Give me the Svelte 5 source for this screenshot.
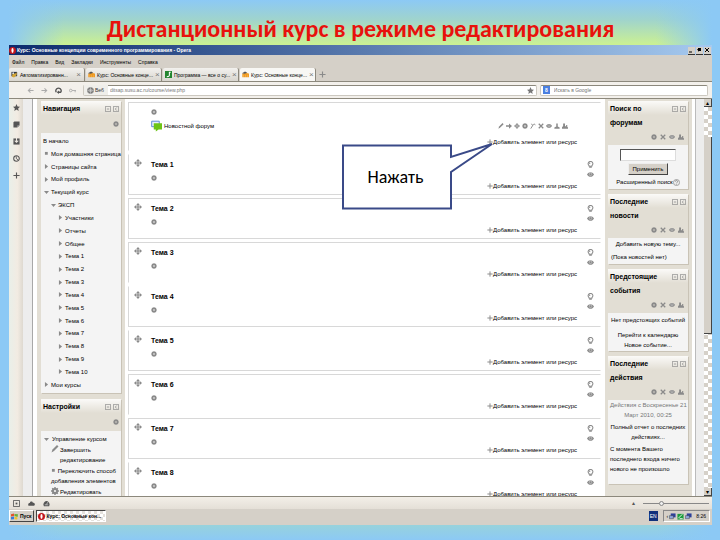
<script lang="ts">
	const menu = ['Файл', 'Правка', 'Вид', 'Закладки', 'Инструменты', 'Справка'];

	const tabs = [
		{ icon: 'photo', title: 'Автоматизированн...' },
		{ icon: 'moodle', title: 'Курс: Основные конце...' },
		{ icon: 'leaf', title: 'Программа — все о су...' },
		{ icon: 'moodle', title: 'Курс: Основные конце...' },
	];

	const nav = [
		{ level: 0, mark: '', label: 'В начало' },
		{ level: 1, mark: 'square', label: 'Моя домашняя страница' },
		{ level: 1, mark: 'right', label: 'Страницы сайта' },
		{ level: 1, mark: 'right', label: 'Мой профиль' },
		{ level: 1, mark: 'down', label: 'Текущий курс' },
		{ level: 2, mark: 'down', label: 'ЭКСП' },
		...['Участники', 'Отчеты', 'Общее', 'Тема 1', 'Тема 2', 'Тема 3', 'Тема 4', 'Тема 5',
			'Тема 6', 'Тема 7', 'Тема 8', 'Тема 9', 'Тема 10'
		].map((label) => ({ level: 3, mark: 'right', label })),
		{ level: 1, mark: 'right', label: 'Мои курсы' },
	];

	// some of the frame lines are dropped where sections meet
	const topics = [
		{ n: 1, top: false, bottom: true },
		{ n: 2, top: true, bottom: true },
		{ n: 3, top: true, bottom: false },
		{ n: 4, top: false, bottom: true },
		{ n: 5, top: false, bottom: true },
		{ n: 6, top: true, bottom: false },
		{ n: 7, top: true, bottom: true },
		{ n: 8, top: false, bottom: true },
	];

	const forumTools = ['pencil', 'arrow', 'move', 'gear', 'fork', 'cross', 'eye', 'person', 'group'];
	const blockTools = ['gear', 'cross', 'eye', 'group'];
	const sideTools = ['star', 'note', 'download', 'clock', 'plus'];
	let search = $state('');
	let address = $state('ditsap.susu.ac.ru/course/view.php');
	let google = $state('');
</script>

{#snippet icon(name: string)}
	<svg class="icon" viewBox="0 0 16 16" aria-hidden="true">
		{#if name === 'gear'}
			<circle cx="8" cy="8" r="4.2" fill="none" stroke="currentColor" stroke-width="4" />
			<path d="M8 0v4M8 12v4M0 8h4M12 8h4M2.4 2.4l2.8 2.8M10.8 10.8l2.8 2.8M13.6 2.4l-2.8 2.8M5.2 10.8l-2.8 2.8" stroke="currentColor" stroke-width="3" />
		{:else if name === 'move'}
			<path d="M8 0l4 4.4H9.2v2.4h2.4V4L16 8l-4.4 4V9.2H9.2v2.4H12L8 16l-4-4.4h2.8V9.2H4.4V12L0 8l4.4-4v2.8h2.4V4.4H4z" fill="currentColor" />
		{:else if name === 'plus'}
			<path d="M8 1v14M1 8h14" stroke="currentColor" stroke-width="2.6" />
		{:else if name === 'bulb'}
			<path d="M5 11C1 8 2 1 8 1s7 7 3 10v1H5z" fill="#fff" stroke="currentColor" stroke-width="2.4" />
			<path d="M5 14h6M5 6l2-2" stroke="currentColor" stroke-width="3" />
		{:else if name === 'eye'}
			<path d="M0 8C4 1 12 1 16 8 12 15 4 15 0 8z" fill="currentColor" />
			<circle cx="8" cy="7.5" r="3" fill="none" stroke="#ddd" stroke-width="1.2" />
		{:else if name === 'pencil'}
			<path d="M1 15l2-6L12 0l3 3-9 9z" fill="currentColor" />
		{:else if name === 'arrow'}
			<path d="M0 6h8V1l8 7-8 7v-5H0z" fill="currentColor" />
		{:else if name === 'fork'}
			<path d="M2 15L7 7M7 7L4 2M7 7c3-6 6-4 8-1" fill="none" stroke="currentColor" stroke-width="2.6" />
		{:else if name === 'cross'}
			<path d="M2 2l12 12M14 2L2 14" stroke="currentColor" stroke-width="3.4" />
		{:else if name === 'person'}
			<path d="M6 1h4v8l5 3v3H1v-3l5-3z" fill="currentColor" />
		{:else if name === 'group'}
			<path d="M3 1h5v7l3 1V5h3v5l2 2v3H0v-4l3-3z" fill="currentColor" />
		{:else if name === 'right'}
			<path d="M3 0l10 8-10 8z" fill="currentColor" />
		{:else if name === 'down'}
			<path d="M0 3h16l-8 10z" fill="currentColor" />
		{:else if name === 'square'}
			<path d="M3 3h9v9H3z" fill="#8a8a8a" />
		{:else if name === 'star'}
			<path d="M8 0l2.4 5.6L16 6l-4.2 4L13 16l-5-3.2L3 16l1.2-6L0 6l5.6-.4z" fill="currentColor" />
		{:else if name === 'note'}
			<path d="M3 1h12v9l-5 5H1V3z" fill="currentColor" />
			<path d="M10 15v-4l5-1" fill="none" stroke="#ddd" />
		{:else if name === 'download'}
			<path d="M1 1h14v14H1z" fill="currentColor" />
			<path d="M8 0v9M4 6l4 4 4-4" fill="none" stroke="#efeae2" stroke-width="2.4" />
		{:else if name === 'clock'}
			<circle cx="8" cy="8" r="6.4" fill="none" stroke="currentColor" stroke-width="2.4" />
			<path d="M7.5 3v5l4 3" fill="none" stroke="currentColor" stroke-width="2" />
		{:else if name === 'back'}
			<path d="M15 8H3M8 3L3 8l5 5" fill="none" stroke="currentColor" stroke-width="2.4" />
		{:else if name === 'forward'}
			<path d="M1 8h12M8 3l5 5-5 5" fill="none" stroke="currentColor" stroke-width="2.4" />
		{:else if name === 'reload'}
			<path d="M3 12A6 6 0 1 1 13 12H7" fill="none" stroke="currentColor" stroke-width="3" />
			<path d="M9 8v8l-5-4z" fill="currentColor" />
		{:else if name === 'key'}
			<circle cx="4" cy="8" r="3" fill="none" stroke="currentColor" stroke-width="2" />
			<path d="M7 8h9M14 8v4" stroke="currentColor" stroke-width="2" />
		{:else if name === 'globe'}
			<circle cx="8" cy="8" r="7.5" fill="#777" />
			<path d="M8 1v14M1 8h14M3 4c3 3 7 3 10 0M3 12c3-3 7-3 10 0" fill="none" stroke="#eee" />
		{:else if name === 'minus'}
			<path d="M1 1h14v14H1zM5 8h6" fill="none" stroke="currentColor" stroke-width="2" />
		{:else if name === 'dock'}
			<path d="M1 1h14v14H1zM10 4L6 8l4 4" fill="none" stroke="currentColor" stroke-width="2" />
		{:else if name === 'opera'}
			<circle cx="8" cy="8" r="8" fill="#c3161c" />
			<ellipse cx="8" cy="8" rx="2.4" ry="5.6" fill="#fff" />
		{:else if name === 'moodle'}
			<path d="M2 14V7h3v7M7 14V7h3v7M12 14V7h3v7M2 8c2-3 12-3 13 0" fill="none" stroke="#f09a20" stroke-width="2.6" />
			<path d="M0 5l7-4 5 3-6 2z" fill="#555" />
		{:else if name === 'leaf'}
			<path d="M0 0h16v16H0z" fill="#23852f" />
			<path d="M4 13c7 0 6-3 6-6V3h3" fill="none" stroke="#fff" stroke-width="2.4" />
		{:else if name === 'photo'}
			<path d="M1 2h13v10H1z" fill="#2c3444" />
			<path d="M4 4l5 2 4-3v6l-6 6-5-2z" fill="#d3a63a" />
			<circle cx="5" cy="5" r="2" fill="#dfe8f4" />
		{:else if name === 'forum'}
			<path d="M1 1h11v8H1z" fill="#e8f0ff" stroke="#5b86d6" stroke-width="1.4" />
			<path d="M4 4h12v9h-5l-4 3v-3H4z" fill="#6dc416" />
		{:else if name === 'windows'}
			<path d="M0 3l7-2v6L0 8z" fill="#e5502a" />
			<path d="M8 2l8 1-1 6-7-2z" fill="#6cae36" />
			<path d="M0 9l7-1v6l-7 1z" fill="#3a7ad8" />
			<path d="M8 8l7 2-1 5-6-1z" fill="#f2c02c" />
		{:else if name === 'help'}
			<circle cx="8" cy="8" r="7" fill="#eee" stroke="#888" stroke-width="1.6" />
			<path d="M5.5 6c0-4 5-3 5 0 0 2-2.5 2-2.5 4M8 11.5v1.5" fill="none" stroke="#777" stroke-width="1.6" />
		{:else if name === 'panel'}
			<path d="M1 1h14v14H1z" fill="none" stroke="currentColor" stroke-width="2" />
			<path d="M6 6h4v4H6z" fill="currentColor" />
		{:else if name === 'cloud'}
			<path d="M1 13c-2-5 2-6 3-6 1-5 7-4 7-1 5 0 6 4 3 7z" fill="currentColor" />
		{:else if name === 'turbo'}
			<path d="M2 14C-1 7 4 2 8 2s9 5 6 12z" fill="currentColor" />
			<path d="M8 10l3-5M4 11h8" stroke="#ddd" stroke-width="1.6" />
		{:else if name === 'screen'}
			<path d="M4 1h11v9H4z" fill="#2b3f9a" />
			<path d="M1 6h9v7H1z" fill="#8fa6dc" stroke="#333" />
		{:else if name === 'check'}
			<path d="M1 2h14v13H1z" fill="#1c9c3c" />
			<path d="M3 12l9-9M6 13h7" stroke="#fff" stroke-width="2" />
		{/if}
	</svg>
{/snippet}

{#snippet addLink()}
	<a class="add" href="#add">{@render icon('plus')}Добавить элемент или ресурс</a>
{/snippet}

{#snippet sideHead(lines: string[], tools: string[])}
	<header class="block-head">
		<div class="block-title">
			<h2>{#each lines as line}<span>{line}</span>{/each}</h2>
			<button aria-label="Свернуть">{@render icon('minus')}</button>
			<button aria-label="Закрепить">{@render icon('dock')}</button>
		</div>
		<div class="block-tools">
			{#each tools as tool}<button aria-label={tool}>{@render icon(tool)}</button>{/each}
		</div>
	</header>
{/snippet}

<div class="slide">
	<h1>Дистанционный курс в режиме редактирования</h1>

	<div class="window">
		<div class="titlebar">
			{@render icon('opera')}
			<span>Курс: Основные концепции современного программирования - Opera</span>
			<div class="winbuttons">
				<button aria-label="Свернуть окно"><svg viewBox="0 0 6 6"><path d="M1 5h3" stroke="#000" /></svg></button>
				<button aria-label="Восстановить окно"><svg viewBox="0 0 6 6"><path d="M2 1h3v3H2zM1 2h2v3" fill="#000" /></svg></button>
				<button aria-label="Закрыть окно"><svg viewBox="0 0 6 6"><path d="M1 1l4 4M5 1L1 5" stroke="#000" /></svg></button>
			</div>
		</div>

		<nav class="menu">
			{#each menu as item}<button>{item}</button>{/each}
		</nav>

		<div class="tabs">
			{#each tabs as tab, i}
				<button class="tab" class:active={i === 3}>
					{@render icon(tab.icon)}<span>{tab.title}</span><i>×</i>
				</button>
			{/each}
			<button class="newtab" aria-label="Новая вкладка">{@render icon('plus')}</button>
		</div>

		<div class="address">
			{#each ['back', 'forward', 'reload', 'key'] as name}
				<button class={name} aria-label={name}>{@render icon(name)}</button>
			{/each}
			<div class="field url">
				<span class="badge">{@render icon('globe')}Веб</span>
				<input aria-label="Адрес" bind:value={address} />
				{@render icon('star')}
			</div>
			<div class="field google">
				<b>8</b>
				<input aria-label="Поиск" placeholder="Искать в Google" bind:value={google} />
			</div>
		</div>

		<div class="view">
			<aside class="panelbar">
				{#each sideTools as tool}<button aria-label={tool}>{@render icon(tool)}</button>{/each}
			</aside>
			<div class="gutter"></div>

			<div class="page">
				<aside class="left">
					<section class="block">
						{@render sideHead(['Навигация'], ['gear'])}
						<ul class="nav">
							{#each nav as item}
								<li class="level{item.level}">
									{#if item.mark}{@render icon(item.mark)}{/if}
									<a href="#nav">{item.label}</a>
								</li>
							{/each}
						</ul>
					</section>
					<section class="block">
						{@render sideHead(['Настройки'], ['gear'])}
						<ul class="settings">
							<li>{@render icon('down')}<a href="#course">Управление курсом</a></li>
							<li class="sub big">{@render icon('pencil')}<a href="#edit">Завершить<br />редактирование</a></li>
							<li class="sub"><a href="#mode">{@render icon('square')} Переключить способ<br />добавления элементов</a></li>
							<li class="sub big">{@render icon('gear')}<a href="#settings">Редактировать</a></li>
						</ul>
					</section>
				</aside>

				<main>
					<section class="topic top general">
						<div class="grip"></div>
						<div class="body">
							<button class="gear" aria-label="Настроить">{@render icon('gear')}</button>
							<div class="forum">
								<a href="#forum">{@render icon('forum')}Новостной форум</a>
								<div class="forum-tools">
									{#each forumTools as tool}<button aria-label={tool}>{@render icon(tool)}</button>{/each}
								</div>
							</div>
							{@render addLink()}
						</div>
						<div class="marks"></div>
					</section>

					{#each topics as topic}
						<section class="topic" class:top={topic.top} class:bottom={topic.bottom}>
							<div class="grip">{@render icon('move')}</div>
							<div class="body">
								<h3>Тема {topic.n}</h3>
								<button class="gear" aria-label="Настроить">{@render icon('gear')}</button>
								{@render addLink()}
							</div>
							<div class="marks">
								<button aria-label="Выделить">{@render icon('bulb')}</button>
								<button aria-label="Скрыть">{@render icon('eye')}</button>
							</div>
						</section>
					{/each}

					<div class="callout">
						<svg viewBox="0 0 153 68" aria-hidden="true">
							<path d="M2 3.5H110V15L151 2 110 30V66.500H2z" fill="#fff" stroke="#3a4a88" stroke-width="2" />
						</svg>
						<p>Нажать</p>
					</div>
				</main>

				<aside class="right">
					<section class="block">
						{@render sideHead(['Поиск по', 'форумам'], blockTools)}
						<form class="content search" onsubmit={(e) => e.preventDefault()}>
							<input aria-label="Поиск по форумам" bind:value={search} />
							<button>Применить</button>
							<a href="#advanced">Расширенный поиск{@render icon('help')}</a>
						</form>
					</section>
					<section class="block">
						{@render sideHead(['Последние', 'новости'], blockTools)}
						<div class="content news">
							<a href="#add-topic">Добавить новую тему...</a>
							<p>(Пока новостей нет)</p>
						</div>
					</section>
					<section class="block">
						{@render sideHead(['Предстоящие', 'события'], blockTools)}
						<div class="content events">
							<p>Нет предстоящих событий</p>
							<a href="#calendar">Перейти к календарю</a>
							<a href="#event">Новое событие...</a>
						</div>
					</section>
					<section class="block">
						{@render sideHead(['Последние', 'действия'], blockTools)}
						<div class="content recent">
							<p class="date">Действия с Воскресенье 21<br />Март 2010, 00:25</p>
							<a href="#report">Полный отчет о последних<br />действиях...</a>
							<p>С момента Вашего<br />последнего входа ничего<br />нового не произошло</p>
						</div>
					</section>
				</aside>
			</div>

			<div class="scroll">
				<button aria-label="Вверх">▴</button>
				<div class="thumb"></div>
				<button aria-label="Вниз">▾</button>
			</div>
		</div>

		<footer class="status">
			<button aria-label="Панели">{@render icon('panel')}</button>
			<button aria-label="Облако">{@render icon('cloud')}</button>
			<button aria-label="Turbo">{@render icon('turbo')}</button>
			<span class="up">▴</span>
			<input type="range" aria-label="Масштаб" min="0" max="100" value="27" />
		</footer>

		<footer class="taskbar">
			<button class="start">{@render icon('windows')}Пуск</button>
			<button class="task">{@render icon('opera')}Курс: Основные кон...</button>
			<span class="lang">EN</span>
			<div class="tray">
				<span>‹</span>{@render icon('screen')}{@render icon('check')}{@render icon('screen')}
				<time>8:26</time>
			</div>
		</footer>
	</div>
</div>

<style>
	:global(body) {
		margin: 0;
	}

	.slide {
		--ink: #000;
		--grey: #8a8a8a;
		--sand: #e2ded4;
		box-sizing: border-box;
		height: 100vh;
		padding: 0 8px 15px 9px;
		display: flex;
		flex-direction: column;
		overflow: hidden;
		font: 6px/10px "Liberation Sans", Arial, sans-serif;
		color: var(--ink);
		background:
			linear-gradient(to right, #8cc9f5 8px, #8cc9f500 64px),
			linear-gradient(to left, #8cc9f5 8px, #8cc9f500 64px),
			linear-gradient(#8cc9f5, #a0d4cc 20px, #caf094 44px, #caf094 85%, #98d3da 97%, #8cc9f5);
	}

	h1 {
		margin: 0;
		height: 45px;
		font: bold 24px/58px Carlito, Lato, sans-serif;
		text-align: center;
		white-space: nowrap;
		color: #e8110c;
	}

	h2, h3, p, ul {
		margin: 0;
		padding: 0;
		list-style: none;
	}

	button, input {
		margin: 0;
		padding: 0;
		border: 0;
		background: none;
		font: inherit;
		color: inherit;
		min-width: 0;
	}

	button {
		display: flex;
		align-items: center;
		white-space: nowrap;
	}

	a {
		color: inherit;
		text-decoration: none;
		white-space: nowrap;
	}

	.icon {
		width: 7px;
		height: 7px;
		flex: none;
	}

	.window {
		flex: 1;
		min-height: 0;
		display: flex;
		flex-direction: column;
		background: #d5d0c8;
	}

	.titlebar {
		height: 10px;
		display: flex;
		align-items: center;
		gap: 1px;
		font-size: 5px;
		font-weight: bold;
		color: #fff;
		background: linear-gradient(to right, #0c2a6c, #a6caf0);
	}

	.winbuttons {
		margin-left: auto;
		padding-right: 1px;
		display: flex;
		gap: 1px;
	}

	.winbuttons button {
		width: 7px;
		height: 7px;
		background: #d5d0c8;
		box-shadow: 0 1px #333;
	}

	.winbuttons svg {
		width: 6px;
		height: 6px;
	}

	.menu {
		height: 13px;
		padding-left: 3px;
		display: flex;
		align-items: center;
		gap: 7px;
		font-size: 5px;
	}

	.tabs {
		height: 13px;
		display: flex;
		gap: 1px;
		font-size: 5px;
		border-bottom: 1px solid #8c887c;
	}

	.tab {
		width: 76px;
		gap: 2px;
		padding: 0 3px 0 2px;
		background: linear-gradient(#f2f1ee, #d9d6cf);
		border-right: 1px solid #8c887c;
		border-radius: 2px 2px 0 0;
	}

	.tab.active {
		background: #f8f7f4;
	}

	.tab span {
		flex: 1;
		text-align: left;
	}

	.tab i {
		font-style: normal;
		font-size: 8px;
		color: #777;
	}

	.newtab {
		padding-left: 2px;
		color: var(--grey);
	}

	.address {
		height: 16px;
		padding: 0 4px 0 18px;
		display: flex;
		align-items: center;
		gap: 7px;
		color: #aaa;
		background: #f3f0eb;
		box-sizing: border-box;
	}

	.reload {
		color: #555;
	}

	.field {
		height: 11px;
		box-sizing: border-box;
		display: flex;
		align-items: center;
		font-size: 5px;
		background: #fff;
		border: 1px solid #ccc8c0;
		border-top-color: #8c887c;
		border-radius: 2px;
		color: #777;
	}

	.field input {
		flex: 1;
	}

	.url {
		flex: 1;
		padding-right: 2px;
	}

	.google {
		width: 168px;
		gap: 4px;
		margin-left: -4px;
	}

	.google b {
		padding: 0 2px;
		color: #fff;
		background: #4a7fe0;
		line-height: 8px;
		margin-left: 2px;
	}

	.badge {
		display: flex;
		align-items: center;
		gap: 1px;
		padding: 0 4px 0 3px;
		margin-right: 2px;
		background: #efeeea;
		color: #333;
	}

	.view {
		flex: 1;
		min-height: 0;
		display: flex;
		overflow: hidden;
		border-top: 1px solid #8c887c;
		border-bottom: 1px solid #8c887c;
	}

	.panelbar {
		width: 14px;
		padding-top: 5px;
		display: flex;
		flex-direction: column;
		align-items: center;
		gap: 10px;
		color: #555;
		background: linear-gradient(to right, #e9efe9, #f2ebe2 60%, #ded9d0);
	}

	.panelbar button {
		height: 7px;
	}

	.gutter {
		width: 9px;
		background: #ededed;
		border-right: 1px solid #a8a8a8;
	}

	.page {
		flex: 1;
		min-width: 0;
		display: flex;
		background: #fff;
		padding: 0 3px 0 4px;
		border-right: 1px solid #bbb;
		box-shadow: 8px 0 #ededed;
		margin-right: 8px;
	}

	.left, .right {
		width: 80px;
		display: flex;
		flex-direction: column;
		background: var(--sand);
	}

	.left {
		padding: 2px 4px 0;
		gap: 6px;
	}

	.right {
		padding: 2px 4px 0 3px;
		gap: 5px;
	}

	.block {
		background: #f4f4f4;
		box-shadow: 1px 1px #c9c3b6;
	}

	.block-head {
		padding: 1px 2px 2px;
		background: linear-gradient(#fbfaf8, var(--sand) 14px);
		color: var(--grey);
	}

	.block-title {
		display: flex;
		gap: 2px;
	}

	.block-title button {
		height: 14px;
		align-items: center;
	}

	.block-title .icon {
		width: 6px;
		height: 6px;
	}

	h2 {
		flex: 1;
		font-size: 7px;
		line-height: 14px;
		color: #000;
	}

	h2 span {
		display: block;
	}

	.block-tools {
		height: 13px;
		padding-right: 2px;
		display: flex;
		justify-content: flex-end;
		align-items: center;
		gap: 3px;
	}

	.left .block-tools {
		height: 15px;
		padding-right: 0;
	}

	.block-tools .icon, .forum-tools .icon {
		width: 6px;
		height: 6px;
	}

	.nav {
		height: 254px;
		padding: 3px 2px;
		display: flex;
		flex-direction: column;
		justify-content: space-between;
	}

	.nav li {
		display: flex;
		align-items: center;
		gap: 2px;
	}

	.left ul {
		color: var(--grey);
	}

	.left li a {
		color: var(--ink);
	}

	.left li .icon {
		width: 5px;
		height: 5px;
	}

	.level1 {
		padding-left: 1px;
	}

	.level2 {
		padding-left: 8px;
	}

	.level3 {
		padding-left: 15px;
	}

	.settings {
		padding: 3px;
	}

	.settings li {
		display: flex;
		align-items: center;
		gap: 3px;
		padding-bottom: 1px;
	}

	.settings .sub {
		padding-left: 7px;
		align-items: flex-start;
		gap: 1px;
	}

	.settings .big .icon {
		width: 8px;
		height: 8px;
	}

	main {
		flex: 1;
		min-width: 0;
		position: relative;
		padding: 3px 4px 0 3px;
		display: flex;
		flex-direction: column;
		gap: 3px;
		background: #fff;
	}

	.topic {
		flex: none;
		min-height: 41px;
		box-sizing: border-box;
		display: flex;
		border: 1px solid transparent;
		border-left-color: #d8d8d8;
	}

	.top {
		border-top-color: #d8d8d8;
	}

	.bottom {
		border-bottom-color: #d8d8d8;
	}

	.general {
		min-height: 49px;
	}

	.grip {
		width: 22px;
		padding: 4px 0 0 5px;
		box-sizing: border-box;
		color: var(--grey);
	}

	.grip .icon {
		width: 8px;
		height: 8px;
	}

	.body {
		flex: 1;
		padding-top: 5px;
		display: flex;
		flex-direction: column;
		align-items: flex-start;
	}

	h3 {
		font-size: 7px;
		line-height: 10px;
		color: #000;
	}

	.gear {
		height: 6px;
		margin-top: 5px;
		color: var(--grey);
	}

	.gear .icon {
		width: 6px;
		height: 6px;
	}

	.add {
		display: flex;
		align-items: center;
		align-self: flex-end;
		height: 10px;
	}

	.add .icon {
		width: 6px;
		height: 6px;
		color: var(--grey);
	}

	.marks {
		width: 23px;
		padding: 5px 0 0 4px;
		box-sizing: border-box;
		display: flex;
		flex-direction: column;
		align-items: center;
		gap: 2px;
		color: var(--grey);
	}

	.marks button {
		height: 8px;
	}

	.general .body {
		padding-top: 1px;
	}

	.forum {
		align-self: stretch;
		display: flex;
		align-items: center;
		justify-content: space-between;
		padding: 5px 9px 5px 0;
	}

	.forum a {
		display: flex;
		align-items: center;
		gap: 2px;
	}

	.forum a .icon {
		width: 11px;
		height: 12px;
	}

	.forum-tools {
		display: flex;
		gap: 2px;
		color: var(--grey);
	}

	.callout {
		position: absolute;
		top: 43px;
		right: 111px;
		width: 153px;
		height: 68px;
	}

	.callout svg {
		position: absolute;
		inset: 0;
	}

	.callout p {
		position: relative;
		width: 109px;
		font: 18px/70px Carlito, Lato, sans-serif;
		text-align: center;
		color: #000;
	}

	.content {
		display: flex;
		flex-direction: column;
		text-align: center;
		white-space: nowrap;
	}

	.search {
		padding: 4px 0 2px;
		align-items: center;
		gap: 2px;
	}

	.search input {
		width: 56px;
		height: 12px;
		box-sizing: border-box;
		background: #fff;
		border: 1px solid #ddd;
		border-top-color: #555;
		border-left-color: #555;
	}

	.search button {
		height: 12px;
		padding: 0 3px;
		background: #d5d0c8;
		border: 1px solid #eee;
		border-right-color: #444;
		border-bottom-color: #444;
	}

	.search a {
		display: flex;
		align-items: center;
	}

	.news {
		padding-top: 1px;
		gap: 3px;
	}

	.news p {
		padding: 0 3px 2px;
		text-align: left;
	}

	.events {
		padding: 2px 0 1px;
	}

	.events p {
		padding-bottom: 5px;
	}

	.recent {
		padding: 0 2px 10px;
		gap: 2px;
	}

	.recent p {
		text-align: left;
	}

	.recent .date {
		text-align: center;
		color: #777;
	}

	.scroll {
		width: 8px;
		display: flex;
		flex-direction: column;
		background: repeating-conic-gradient(#d5d0c8 0 25%, #fff 0 50%) 0 0 / 8px 8px;
	}

	.scroll button {
		height: 8px;
		justify-content: center;
		background: #d5d0c8;
		border-right: 1px solid #444;
		border-bottom: 1px solid #444;
		color: #000;
	}

	.thumb {
		flex: 0 1 196px;
		margin: 30px 0 auto;
		background: #d5d0c8;
		border-right: 1px solid #444;
		border-bottom: 1px solid #444;
	}

	.status {
		height: 12px;
		padding: 0 3px 0 4px;
		display: flex;
		align-items: center;
		gap: 8px;
		color: #555;
		background: linear-gradient(#f3efe8, #e4dfd7);
	}

	.up {
		margin-left: auto;
	}

	.status input {
		appearance: none;
		width: 66px;
		height: 6px;
		background: linear-gradient(#888, #888) center / 100% 1px no-repeat;
	}

	.status input::-webkit-slider-thumb {
		appearance: none;
		width: 5px;
		height: 5px;
		border: 1px solid #888;
		border-radius: 50%;
		background: #eee;
	}

	.taskbar {
		height: 16px;
		padding: 1px 2px 3px 0;
		box-sizing: border-box;
		display: flex;
		gap: 2px;
		font-size: 5px;
	}

	.start {
		gap: 2px;
		padding: 0 1px;
		font-weight: bold;
		border: 1px solid #fff;
		border-right-color: #444;
		border-bottom-color: #444;
	}

	.task {
		width: 70px;
		gap: 2px;
		padding-left: 1px;
		font-weight: bold;
		border: 1px solid #fff;
		border-top-color: #444;
		border-left-color: #444;
		background: repeating-conic-gradient(#e4e1dc 0 25%, #fff 0 50%) 0 0 / 6px 6px;
	}

	.lang {
		margin: 1px 3px 1px auto;
		padding: 0 1px;
		color: #fff;
		background: #10307c;
	}

	.tray {
		display: flex;
		align-items: center;
		gap: 1px;
		padding: 0 3px;
		border: 1px solid #fff;
		border-top-color: #888;
		border-left-color: #888;
	}

	.tray time {
		margin-left: 3px;
	}
</style>
